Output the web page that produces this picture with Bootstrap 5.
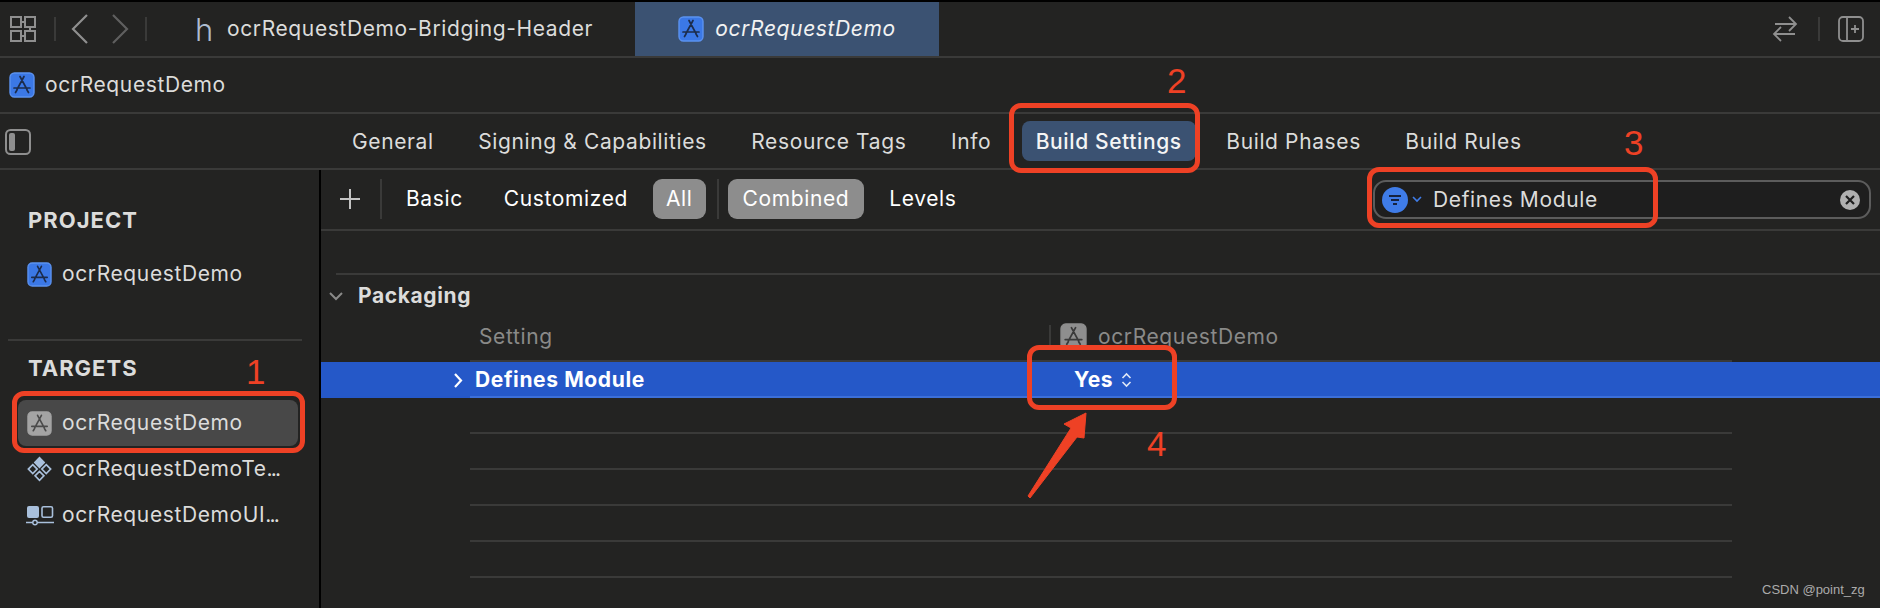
<!DOCTYPE html>
<html lang="en">
<head>
<meta charset="utf-8">
<title>ocrRequestDemo</title>
<link rel="stylesheet" href="https://cdn.jsdelivr.net/npm/bootstrap@5.3.0/dist/css/bootstrap.min.css">
<style>
html,body{height:100%;}
body{margin:0;background:#232322;color:#dcdcdb;font-family:Inter,"Liberation Sans",sans-serif;font-size:21px;letter-spacing:.62px;overflow:hidden;position:relative;width:1880px;height:608px;}
.xc-bar{border-bottom:2px solid #3a3a39;}
.xc-top{border-top:2px solid #000;box-sizing:content-box;height:54px;}
.xc-crumb{height:56px;padding-left:9px;gap:10px;}
.xc-tabsbar{height:56px;position:relative;padding-left:338px;gap:16.5px;}
.xc-vd{width:2px;background:#3a3a39;flex:none;}
.xc-tab{height:100%;}
.xc-tab-active{width:304px;background:#3b5272;color:#f2f2f2;font-style:italic;margin-left:42px;gap:11px;}
.xc-h{font-size:31px;font-weight:300;color:#aebccf;width:13px;margin-left:48px;margin-right:19px;line-height:1;letter-spacing:0;}
.xc-pill{padding:0 14px;height:40px;border-radius:8px;color:#dcdcdb;display:flex;align-items:center;line-height:1;}
.xc-pill-on{background:#3b5272;color:#f5f5f5;font-weight:500;}
.xc-main{height:438px;}
.xc-side{width:321px;border-right:2px solid #000;padding-top:36px;flex:none;}
.xc-label{font-weight:700;font-size:22px;letter-spacing:1px;line-height:28px;padding-left:28px;color:#dcdcdb;}
.xc-item{height:46px;margin:0 21px 0 18px;padding-left:9px;gap:10px;border-radius:8px;white-space:nowrap;}
.xc-item-on{background:#484848;}
.xc-item svg{flex:none;}
.xc-dots{letter-spacing:-1.8px;}
.xc-sep{height:2px;background:#3a3a39;margin:42px 17px 0 8px;}
.xc-content{flex:1;min-width:0;}
.xc-filter{height:61px;padding-left:16px;padding-bottom:2px;position:relative;}
.xc-fb{padding:0 12px;height:40px;border-radius:9px;color:#fff;display:flex;align-items:center;line-height:1;}
.xc-fb-on{background:#8d8d8d;color:#fff;}
.xc-search{position:absolute;left:1052px;top:10px;width:498px;height:39px;border:2px solid #5c5c5c;border-radius:13px;background:#1e1e1e;padding-left:7px;}
.xc-grouphead{height:44px;margin-top:42px;border-top:2px solid #3a3a39;margin-left:15px;padding-left:22px;font-weight:700;}
.xc-colhead{height:45px;color:#8a8a89;padding-bottom:6px;}
.xc-c1{width:728px;flex:none;padding-left:158px;}
.xc-row{height:36px;margin-left:149px;margin-right:148px;border-bottom:2px solid #3a3a39;}
.xc-selected{height:36px;background:#2558c8;color:#fff;font-weight:700;position:relative;}
.xc-selected::before{content:"";position:absolute;left:149px;top:-2px;height:2px;background:#3a3a39;width:1262px;}
.xc-selected::after{content:"";position:absolute;left:149px;right:0;bottom:0;height:2px;background:#3c6fd8;}
.xc-ann{position:absolute;border:5px solid #ee4125;border-radius:12px;pointer-events:none;}
.xc-num{position:absolute;color:#ee4125;font-family:"Liberation Sans",sans-serif;font-size:35px;letter-spacing:0;line-height:1;font-weight:400;}
.xc-abs{position:absolute;}
.xc-wm{position:absolute;left:1762px;top:582px;font-family:"Liberation Sans",sans-serif;font-size:13px;letter-spacing:0;line-height:16px;color:#ababab;}
.xc-ic-blue{--ib:#3b78e6;--ie:#5b92f0;--il:#1c2c4c;}
.xc-ic-grey{--ib:#a4a4a4;--ie:#a4a4a4;--il:#4b4b4b;}
.xc-ic-dim{--ib:#8e8e8e;--ie:#8e8e8e;--il:#3a3a3a;}
</style>
</head>
<body>
<svg width="0" height="0" class="xc-abs">
  <defs>
    <symbol id="appicon" viewBox="0 0 26 26">
      <rect x="1" y="1" width="24" height="24" rx="4.5" fill="var(--ib)" stroke="var(--ie)" stroke-width="1.4"/>
      <path d="M11 4.5 L18 17.5 M15 4.5 L8 17.5 M5 16 H21 M6.5 20.5 L8 18 M19.5 20.5 L18 18" fill="none" stroke="var(--il)" stroke-width="1.7" stroke-linecap="round"/>
    </symbol>
  </defs>
</svg>

<div class="xc-bar xc-top d-flex align-items-center">
  <svg style="margin-left:10px" width="26" height="26" viewBox="0 0 26 26" fill="none" stroke="#8f8f8f" stroke-width="2"><rect x="1" y="1" width="10" height="10"/><rect x="15" y="1" width="10" height="10"/><rect x="1" y="15" width="10" height="10"/><rect x="15" y="15" width="10" height="10"/><path d="M11 6h4M20 11v4M11 20h4"/></svg>
  <span class="xc-vd" style="height:24px;margin-left:18px"></span>
  <svg style="margin-left:15px" width="18" height="30" viewBox="0 0 18 30" fill="none" stroke="#8f8f8f" stroke-width="2.2"><path d="M16 1 2 15l14 14"/></svg>
  <svg style="margin-left:22px" width="18" height="30" viewBox="0 0 18 30" fill="none" stroke="#5f5f5f" stroke-width="2.2"><path d="M2 1l14 14L2 29"/></svg>
  <span class="xc-vd" style="height:24px;margin-left:16px"></span>
  <span class="xc-h">h</span>
  <span class="text-nowrap">ocrRequestDemo-Bridging-Header</span>
  <div class="xc-tab xc-tab-active d-flex align-items-center justify-content-center">
    <svg width="26" height="26" class="xc-ic-blue"><use href="#appicon"/></svg>
    <span>ocrRequestDemo</span>
  </div>
  <div class="ms-auto d-flex align-items-center" style="margin-right:16px">
    <svg width="26" height="28" viewBox="0 0 26 28" fill="none" stroke="#8f8f8f" stroke-width="1.8"><path d="M3 9h20M17 2l7 7-7 7M23 19H3M9 12l-7 7 7 7"/></svg>
    <span class="xc-vd" style="height:24px;margin-left:20px;margin-right:18px"></span>
    <svg width="26" height="26" viewBox="0 0 26 26" fill="none" stroke="#8f8f8f" stroke-width="1.8"><rect x="1" y="1" width="24" height="24" rx="4"/><path d="M9 1v24M13 13h8M17 9v8"/></svg>
  </div>
</div>

<div class="xc-bar xc-crumb d-flex align-items-center">
  <svg width="26" height="26" class="xc-ic-blue"><use href="#appicon"/></svg>
  <span>ocrRequestDemo</span>
</div>

<div class="xc-bar xc-tabsbar d-flex align-items-center">
  <svg class="xc-abs" style="left:5px;top:15px" width="26" height="26" viewBox="0 0 26 26"><rect x="1" y="1" width="24" height="24" rx="4.5" fill="none" stroke="#8f8f8f" stroke-width="2"/><rect x="4" y="4" width="6" height="18" rx="2" fill="#8f8f8f"/></svg>
  <span class="xc-pill">General</span>
  <span class="xc-pill">Signing &amp; Capabilities</span>
  <span class="xc-pill">Resource Tags</span>
  <span class="xc-pill">Info</span>
  <span class="xc-pill xc-pill-on">Build Settings</span>
  <span class="xc-pill">Build Phases</span>
  <span class="xc-pill">Build Rules</span>
</div>

<div class="xc-main d-flex">
  <aside class="xc-side">
    <div class="xc-label">PROJECT</div>
    <div class="xc-item d-flex align-items-center" style="margin-top:17px">
      <svg width="25" height="25" class="xc-ic-blue"><use href="#appicon"/></svg>
      <span>ocrRequestDemo</span>
    </div>
    <div class="xc-sep"></div>
    <div class="xc-label" style="margin-top:13px">TARGETS</div>
    <div class="xc-item xc-item-on d-flex align-items-center" style="margin-top:18px">
      <svg width="25" height="25" class="xc-ic-grey"><use href="#appicon"/></svg>
      <span>ocrRequestDemo</span>
    </div>
    <div class="xc-item d-flex align-items-center">
      <svg width="25" height="26" viewBox="0 0 26 26"><path d="M13 0l6 6.3-6 6.3-6-6.3z" fill="#a9c0dc"/><path d="M6 8.5l4.6 4.6L6 17.7 1.4 13.1zM20 8.5l4.6 4.6-4.6 4.6-4.6-4.6zM13 15.5l4.6 4.6-4.6 4.6-4.6-4.6z" fill="none" stroke="#a9c0dc" stroke-width="1.7"/></svg>
      <span>ocrRequestDemoTe<span class="xc-dots">...</span></span>
    </div>
    <div class="xc-item d-flex align-items-center" style="padding-left:8px;gap:8px">
      <svg width="28" height="21" viewBox="0 0 28 21"><rect x="1" y="1" width="12" height="12" rx="2" fill="#a9c0dc"/><rect x="16" y="1.8" width="10.5" height="10.5" rx="1.5" fill="none" stroke="#a9c0dc" stroke-width="1.6"/><path d="M0 17.5h7M11 17.5h17" stroke="#a9c0dc" stroke-width="1.6"/><circle cx="9" cy="17.5" r="2.2" fill="none" stroke="#a9c0dc" stroke-width="1.4"/></svg>
      <span>ocrRequestDemoUI<span class="xc-dots">...</span></span>
    </div>
  </aside>
  <section class="xc-content">
    <div class="xc-bar xc-filter d-flex align-items-center">
      <svg width="22" height="22" viewBox="0 0 22 22" stroke="#c4c4c4" stroke-width="2" style="margin-left:2px"><path d="M11 1v20M1 11h20"/></svg>
      <span class="xc-vd" style="height:40px;margin-left:19px;margin-right:12px"></span>
      <span class="xc-fb">Basic</span>
      <span class="xc-fb" style="margin-left:17px">Customized</span>
      <span class="xc-fb xc-fb-on" style="margin-left:13px;padding:0 13px">All</span>
      <span class="xc-vd" style="height:40px;margin:0 9px 0 11px"></span>
      <span class="xc-fb xc-fb-on" style="padding:0 15px">Combined</span>
      <span class="xc-fb" style="margin-left:13px">Levels</span>
      <div class="xc-search d-flex align-items-center">
        <svg width="26" height="26" viewBox="0 0 26 26"><circle cx="13" cy="13" r="13" fill="#3f7ce8"/><path d="M7 9h12M9 13h8M11 17h4" stroke="#16233f" stroke-width="2"/></svg>
        <svg class="ms-1" width="10" height="7" viewBox="0 0 10 7" fill="none" stroke="#3f7ce8" stroke-width="1.6"><path d="M1 1l4 4 4-4"/></svg>
        <span style="margin-left:11px">Defines Module</span>
        <svg class="ms-auto" style="margin-right:9px" width="20" height="20" viewBox="0 0 20 20"><circle cx="10" cy="10" r="10" fill="#b0b0b0"/><path d="M6 6l8 8M14 6l-8 8" stroke="#1e1e1e" stroke-width="2.2"/></svg>
      </div>
    </div>
    <div class="xc-grouphead d-flex align-items-center">
      <svg class="xc-abs" style="left:329px;top:292px" width="14" height="9" viewBox="0 0 14 9" fill="none" stroke="#8a8a89" stroke-width="2"><path d="M1 1l6 6 6-6"/></svg>
      <span>Packaging</span>
    </div>
    <div class="xc-colhead d-flex align-items-center">
      <div class="xc-c1">Setting</div>
      <span class="xc-vd" style="height:24px"></span>
      <svg width="27" height="27" style="margin-left:9px" class="xc-ic-dim"><use href="#appicon"/></svg>
      <span style="margin-left:11px">ocrRequestDemo</span>
    </div>
    <div class="xc-selected d-flex align-items-center">
      <svg class="xc-abs" style="left:132px;top:11px" width="10" height="15" viewBox="0 0 10 15" fill="none" stroke="#fff" stroke-width="2.2"><path d="M2 1l6 6.5L2 14"/></svg>
      <div class="xc-c1" style="padding-left:154px">Defines Module</div>
      <span style="margin-left:25px">Yes</span>
      <svg class="ms-2" width="11" height="16" viewBox="0 0 11 16" fill="none" stroke="#dfe7f7" stroke-width="1.6"><path d="M1.5 6l4-4 4 4M1.5 10l4 4 4-4"/></svg>
    </div>
    <div class="xc-row"></div>
    <div class="xc-row"></div>
    <div class="xc-row"></div>
    <div class="xc-row"></div>
    <div class="xc-row"></div>
  </section>
</div>

<div class="xc-ann" style="left:12px;top:391px;width:293px;height:62px"></div>
<div class="xc-ann" style="left:1009px;top:103px;width:191px;height:70px"></div>
<div class="xc-ann" style="left:1367px;top:167px;width:291px;height:61px"></div>
<div class="xc-ann" style="left:1027px;top:345px;width:150px;height:65px"></div>
<span class="xc-num" style="left:246px;top:354px">1</span>
<span class="xc-num" style="left:1167px;top:63px">2</span>
<span class="xc-num" style="left:1624px;top:125px">3</span>
<span class="xc-num" style="left:1147px;top:426px">4</span>
<svg class="xc-abs" style="left:1020px;top:408px" width="72" height="96" viewBox="0 0 72 96"><path d="M66 5 L44 16 L51 20 L8 88 L10 90 L57 29 L64 30 Z" fill="#ee4125" stroke="#ee4125" stroke-width="1" stroke-linejoin="round"/></svg>
<span class="xc-wm">CSDN @point_zg</span>

<script src="https://cdn.jsdelivr.net/npm/bootstrap@5.3.0/dist/js/bootstrap.bundle.min.js"></script>
</body>
</html>
